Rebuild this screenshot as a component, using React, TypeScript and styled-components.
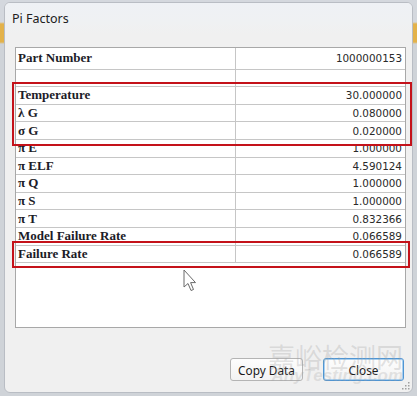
import React from "react";
import styled, { createGlobalStyle } from "styled-components";

const Global = createGlobalStyle`
  html, body { margin: 0; padding: 0; }
  body {
    background: linear-gradient(180deg, #d4d8de 0px, #d4d8de 22px, #e3b24a 24px, #e3b24a 42px, #cfd3d8 44px);
    width: 417px; height: 396px; overflow: hidden;
    font-family: "Noto Sans", "Open Sans", sans-serif;
  }
`;

const Frame = styled.div`
  position: relative;
  box-sizing: border-box;
  margin: 2px 0 0 4px;
  width: 409px;
  height: 391px;
  border: 1px solid #b9bdc4;
  border-radius: 6px;
  background: #f0f0f0;
  display: flex;
  flex-direction: column;
  overflow: hidden;
`;

const TitleBar = styled.div`
  height: 31px;
  display: flex;
  align-items: center;
  padding-left: 7px;
  font-family: "Noto Sans", "Open Sans", sans-serif;
  font-size: 12.5px;
  color: #202020;
  background: linear-gradient(180deg, #eef1f5 0%, #eff1f3 60%, #f0f0f0 100%);
`;

const Body = styled.div`
  flex: 1;
  display: flex;
  flex-direction: column;
  padding: 13px 0 0 10px;
`;

const Table = styled.div`
  box-sizing: border-box;
  width: 391px;
  height: 281px;
  border: 1px solid #a8a8a8;
  background: #ffffff;
  display: flex;
  flex-direction: column;
`;

const Row = styled.div<{ $h: number }>`
  display: grid;
  grid-template-columns: 220px 1fr;
  height: ${(p) => p.$h}px;
  box-sizing: border-box;
  border-bottom: 1px solid #c6c6c6;
  flex: none;
`;

const Label = styled.div`
  display: flex;
  align-items: center;
  padding-left: 2px;
  border-right: 1px solid #c6c6c6;
  font-family: "Liberation Serif", "Times New Roman", serif;
  font-weight: bold;
  font-size: 13px;
  color: #1c1c28;
  white-space: nowrap;
  overflow: hidden;
`;

const Value = styled.div`
  display: flex;
  align-items: center;
  justify-content: flex-end;
  padding-right: 3px;
  font-family: "DejaVu Sans", Verdana, sans-serif;
  font-size: 10.4px;
  color: #2a2a2a;
`;

const Footer = styled.div`
  display: flex;
  justify-content: flex-end;
  gap: 20px;
  padding: 30px 8px 0 0;
`;

const Button = styled.button<{ $focus?: boolean; $w: number }>`
  box-sizing: border-box;
  width: ${(p) => p.$w}px;
  height: 23px;
  padding: 0;
  border-radius: 3px;
  border: 1px solid ${(p) => (p.$focus ? "#4f95d3" : "#b4b4b4")};
  box-shadow: ${(p) => (p.$focus ? "inset 0 0 0 1px #a9d0f0" : "none")};
  background: linear-gradient(180deg, #fdfdfd 0%, #f3f3f3 100%);
  font-family: "Noto Sans", "Open Sans", sans-serif;
  font-size: 11.8px;
  color: #1a1a1a;
`;

const Highlight = styled.div<{ $l: number; $t: number; $w: number; $h: number }>`
  position: absolute;
  left: ${(p) => p.$l}px;
  top: ${(p) => p.$t}px;
  width: ${(p) => p.$w}px;
  height: ${(p) => p.$h}px;
  box-sizing: border-box;
  border: 2px solid #c4121a;
  pointer-events: none;
`;

const Cursor = styled.svg`
  position: absolute;
  left: 178px;
  top: 266px;
`;

const Watermark = styled.div`
  position: absolute;
  left: 263px;
  top: 337px;
  pointer-events: none;
  display: flex;
  flex-direction: column;
  align-items: flex-end;
`;

const WmCn = styled.div`
  font-family: "Noto Sans CJK SC", sans-serif;
  font-size: 27px;
  line-height: 34px;
  color: rgba(160, 160, 160, 0.3);
`;

const WmEn = styled.div`
  margin-top: -8px;
  font-family: "Liberation Sans", Arial, sans-serif;
  font-style: italic;
  font-weight: bold;
  font-size: 17px;
  color: rgba(160, 160, 160, 0.25);
`;

const Grip = styled.svg`
  position: absolute;
  right: 2px;
  bottom: 2px;
`;

const rows: { label: string; value: string; h: number }[] = [
  { label: "Part Number", value: "1000000153", h: 21.5 },
  { label: "", value: "", h: 17.5 },
  { label: "Temperature", value: "30.000000", h: 17.64 },
  { label: "λ G", value: "0.080000", h: 17.64 },
  { label: "σ G", value: "0.020000", h: 17.64 },
  { label: "π E", value: "1.000000", h: 17.64 },
  { label: "π ELF", value: "4.590124", h: 17.64 },
  { label: "π Q", value: "1.000000", h: 17.64 },
  { label: "π S", value: "1.000000", h: 17.64 },
  { label: "π T", value: "0.832366", h: 17.64 },
  { label: "Model Failure Rate", value: "0.066589", h: 17.64 },
  { label: "Failure Rate", value: "0.066589", h: 17.64 },
];

export default function App() {
  return (
    <>
      <Global />
      <Frame>
        <TitleBar>Pi Factors</TitleBar>
        <Body>
          <Table>
            {rows.map((r, i) => (
              <Row key={i} $h={r.h}>
                <Label>{r.label}</Label>
                <Value>{r.value}</Value>
              </Row>
            ))}
          </Table>
          <Footer>
            <Button $w={73}>Copy Data</Button>
            <Button $w={81} $focus>
              Close
            </Button>
          </Footer>
        </Body>
        <Highlight $l={7} $t={79} $w={400} $h={64} />
        <Highlight $l={7} $t={238} $w={398} $h={27} />
        <Cursor width="16" height="24" viewBox="0 0 16 24">
          <path
            d="M1 1 L1 18 L5 14.5 L8 21.5 L10.5 20.5 L7.6 13.6 L12.5 13.6 Z"
            fill="#ffffff"
            stroke="#6a6a6a"
            strokeWidth="1"
            strokeLinejoin="round"
          />
        </Cursor>
        <Watermark>
          <WmCn>嘉峪检测网</WmCn>
          <WmEn>AnyTesting.com</WmEn>
        </Watermark>
        <Grip width="8" height="8" viewBox="0 0 8 8">
          <rect x="6" y="0" width="1.5" height="1.5" fill="#a0a0a0" />
          <rect x="3" y="3" width="1.5" height="1.5" fill="#a0a0a0" />
          <rect x="6" y="3" width="1.5" height="1.5" fill="#a0a0a0" />
          <rect x="0" y="6" width="1.5" height="1.5" fill="#a0a0a0" />
          <rect x="3" y="6" width="1.5" height="1.5" fill="#a0a0a0" />
          <rect x="6" y="6" width="1.5" height="1.5" fill="#a0a0a0" />
        </Grip>
      </Frame>
    </>
  );
}
